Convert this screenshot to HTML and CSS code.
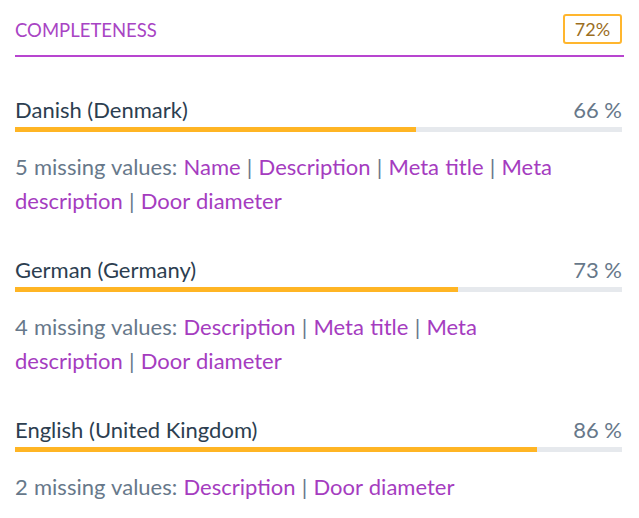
FILE: index.html
```html
<!DOCTYPE html>
<html>
<head>
<meta charset="utf-8">
<link rel="stylesheet" href="styles.css">
</head>
<body>
<div class="panel">
  <div class="header">
    <span class="title">Completeness</span>
    <span class="badge">72%</span>
  </div>
  <div class="locale">
    <div class="locale-head"><span class="name">Danish (Denmark)</span><span class="pct">66 %</span></div>
    <div class="bar"><div class="fill" style="width:66%"></div></div>
    <div class="missing">5 missing values: <a>Name</a> <span class="sep">|</span> <a>Description</a> <span class="sep">|</span> <a>Meta title</a> <span class="sep">|</span> <a>Meta description</a> <span class="sep">|</span> <a>Door diameter</a></div>
  </div>
  <div class="locale">
    <div class="locale-head"><span class="name">German (Germany)</span><span class="pct">73 %</span></div>
    <div class="bar"><div class="fill" style="width:73%"></div></div>
    <div class="missing">4 missing values: <a>Description</a> <span class="sep">|</span> <a>Meta title</a> <span class="sep">|</span> <a>Meta description</a> <span class="sep">|</span> <a>Door diameter</a></div>
  </div>
  <div class="locale">
    <div class="locale-head"><span class="name">English (United Kingdom)</span><span class="pct">86 %</span></div>
    <div class="bar"><div class="fill" style="width:86%"></div></div>
    <div class="missing">2 missing values: <a>Description</a> <span class="sep">|</span> <a>Door diameter</a></div>
  </div>
</div>
</body>
</html>
```
FILE: styles.css
```css
html, body {
  margin: 0;
  padding: 0;
  background: #ffffff;
}
body {
  font-family: Lato, "Open Sans", sans-serif;
}
.panel {
  padding: 0 15px 0 15px;
}
.header {
  display: flex;
  align-items: center;
  justify-content: space-between;
  height: 57px;
  border-bottom: 2px solid #b845d0;
  padding-right: 2px;
  box-sizing: border-box;
}
.title {
  text-transform: uppercase;
  color: #a844c4;
  font-size: 18.5px;
  margin-top: 4px;
}
.badge {
  box-sizing: border-box;
  width: 59px;
  height: 30px;
  border: 2px solid #ffb62e;
  border-radius: 3px;
  color: #9b6e1f;
  font-size: 18px;
  display: flex;
  align-items: center;
  justify-content: center;
  margin-top: 3px;
}
.locale {
  margin-top: 41px;
  padding-right: 2px;
}
.locale + .locale {
  margin-top: 40px;
}
.locale-head {
  display: flex;
  justify-content: space-between;
  line-height: 24px;
  font-size: 22px;
}
.name {
  color: #2c3e50;
}
.pct {
  color: #67788a;
}
.bar {
  margin-top: 5px;
  height: 5px;
  background: #e6e9ed;
}
.fill {
  height: 100%;
  background: #ffb524;
}
.missing {
  margin-top: 18px;
  padding-right: 50px;
  font-size: 22px;
  line-height: 34px;
  word-spacing: 0.6px;
  color: #67788a;
}
.missing a {
  color: #a53cbf;
}
.sep {
  color: #67788a;
}
```
